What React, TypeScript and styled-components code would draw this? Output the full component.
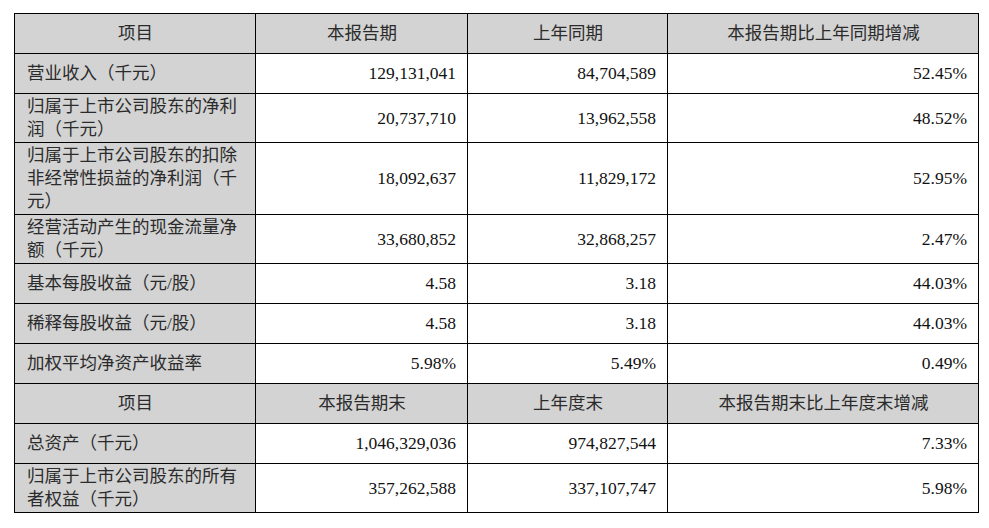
import React from 'react';
import styled, { createGlobalStyle } from 'styled-components';

const GlobalStyle = createGlobalStyle`
  html, body { margin: 0; padding: 0; background: #fff; }
  body { font-family: "Liberation Serif", "Noto Sans CJK SC", serif; }
`;

const Page = styled.div`
  padding: 13px 0 0 14px;
`;

const Table = styled.table`
  border-collapse: collapse;
  table-layout: fixed;
  width: 964px;
  font-size: 17.5px;
  color: #111;
`;

const Col = styled.col<{ $w: number }>`
  width: ${(p) => p.$w}px;
`;

const Row = styled.tr`
  height: 40px;
`;

const Cell = styled.td<{ $head?: boolean; $label?: boolean }>`
  border: 1px solid #000;
  padding: 1px 11px 1px 12px;
  line-height: 23px;
  vertical-align: middle;
  white-space: pre-line;
  text-align: ${(p) => (p.$head ? 'center' : p.$label ? 'left' : 'right')};
  background: ${(p) => (p.$head || p.$label ? '#d3d3d3' : '#fff')};
  color: ${(p) => (p.$head || p.$label ? '#2b2b2b' : '#111')};
`;

type Line = { label: string; values: string[] };

const widths = [241, 212, 200, 311];

const firstHead = ['项目', '本报告期', '上年同期', '本报告期比上年同期增减'];
const firstRows: Line[] = [
  { label: '营业收入（千元）', values: ['129,131,041', '84,704,589', '52.45%'] },
  { label: '归属于上市公司股东的净利\n润（千元）', values: ['20,737,710', '13,962,558', '48.52%'] },
  {
    label: '归属于上市公司股东的扣除\n非经常性损益的净利润（千\n元）',
    values: ['18,092,637', '11,829,172', '52.95%'],
  },
  { label: '经营活动产生的现金流量净\n额（千元）', values: ['33,680,852', '32,868,257', '2.47%'] },
  { label: '基本每股收益（元/股）', values: ['4.58', '3.18', '44.03%'] },
  { label: '稀释每股收益（元/股）', values: ['4.58', '3.18', '44.03%'] },
  { label: '加权平均净资产收益率', values: ['5.98%', '5.49%', '0.49%'] },
];

const secondHead = ['项目', '本报告期末', '上年度末', '本报告期末比上年度末增减'];
const secondRows: Line[] = [
  { label: '总资产（千元）', values: ['1,046,329,036', '974,827,544', '7.33%'] },
  { label: '归属于上市公司股东的所有\n者权益（千元）', values: ['357,262,588', '337,107,747', '5.98%'] },
];

const HeadRow = ({ cells }: { cells: string[] }) => (
  <Row>
    {cells.map((c) => (
      <Cell key={c} $head>
        {c}
      </Cell>
    ))}
  </Row>
);

const DataRow = ({ line }: { line: Line }) => (
  <Row>
    <Cell $label>{line.label}</Cell>
    {line.values.map((v, i) => (
      <Cell key={i}>{v}</Cell>
    ))}
  </Row>
);

export default function App() {
  return (
    <Page>
      <GlobalStyle />
      <Table>
        <colgroup>
          {widths.map((w, i) => (
            <Col key={i} $w={w} />
          ))}
        </colgroup>
        <tbody>
          <HeadRow cells={firstHead} />
          {firstRows.map((l) => (
            <DataRow key={l.label} line={l} />
          ))}
          <HeadRow cells={secondHead} />
          {secondRows.map((l) => (
            <DataRow key={l.label} line={l} />
          ))}
        </tbody>
      </Table>
    </Page>
  );
}
